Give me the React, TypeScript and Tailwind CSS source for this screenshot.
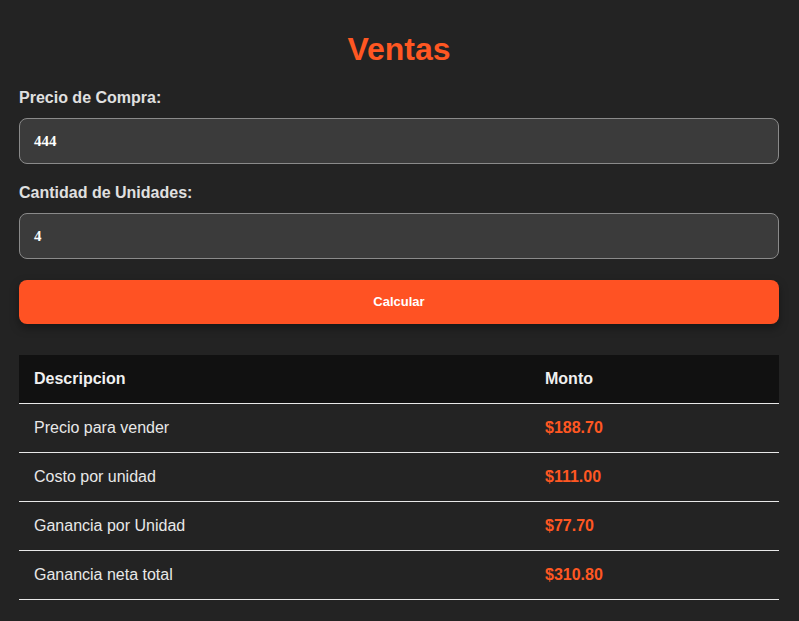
import React from "react";

const rows = [
  { d: "Precio para vender", m: "$188.70" },
  { d: "Costo por unidad", m: "$111.00" },
  { d: "Ganancia por Unidad", m: "$77.70" },
  { d: "Ganancia neta total", m: "$310.80" },
];

export default function App() {
  return (
    <div className="min-h-[621px] w-full bg-[#232323] font-['Liberation_Sans',Arial,sans-serif] text-[#e0e0e0]">
      <div className="pl-[19px] pr-[20px] pt-[31px] pb-[20px]">
        <h1 className="text-center text-[32px] leading-[37px] font-bold text-[#ff5722]">Ventas</h1>
        <div className="mt-[21px] flex flex-col">
          <label className="text-[16px] leading-[18px] font-bold text-[#e0e0e0]">Precio de Compra:</label>
          <div className="mt-[11px] h-[46px] rounded-[8px] border border-[#8a8a8a] bg-[#3b3b3b] flex items-center pl-[14px] font-['Liberation_Serif',serif] font-bold text-[15px] text-white">
            444
          </div>
          <label className="mt-[20px] text-[16px] leading-[18px] font-bold text-[#e0e0e0]">Cantidad de Unidades:</label>
          <div className="mt-[11px] h-[46px] rounded-[8px] border border-[#8a8a8a] bg-[#3b3b3b] flex items-center pl-[14px] font-['Liberation_Serif',serif] font-bold text-[15px] text-white">
            4
          </div>
          <button className="mt-[21px] h-[44px] rounded-[8px] bg-[#ff5223] text-white text-[13px] font-bold shadow-[0_4px_10px_rgba(0,0,0,0.35)]">
            Calcular
          </button>
        </div>
        <table className="mt-[31px] w-full border-collapse">
          <thead>
            <tr className="bg-[#111111] border-b border-[#e8e8e8]">
              <th className="w-[511px] text-left px-[15px] py-[15px] text-[16px] leading-[18px] font-bold text-[#f0f0f0]">Descripcion</th>
              <th className="text-left px-[15px] py-[15px] text-[16px] leading-[18px] font-bold text-[#f0f0f0]">Monto</th>
            </tr>
          </thead>
          <tbody>
            {rows.map((r) => (
              <tr key={r.d} className="border-b border-[#e8e8e8]">
                <td className="px-[15px] py-[15px] text-[16px] leading-[18px] text-[#e8e8e8]">{r.d}</td>
                <td className="px-[15px] py-[15px] text-[16px] leading-[18px] font-bold text-[#ff5722]">{r.m}</td>
              </tr>
            ))}
          </tbody>
        </table>
      </div>
    </div>
  );
}
